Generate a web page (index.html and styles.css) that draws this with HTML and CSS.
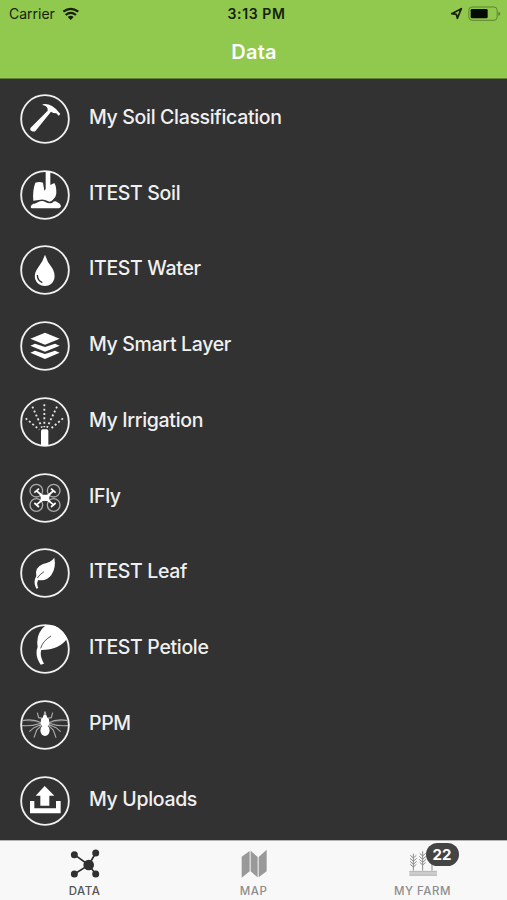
FILE: index.html
```html
<!DOCTYPE html>
<html lang="en">
<head>
<meta charset="utf-8">
<title>Data</title>
<link rel="stylesheet" href="styles.css">
</head>
<body>
<div class="app">
  <header class="header">
    <div class="status">
      <div class="status-left"><span>Carrier</span>
        <svg class="wifi" viewBox="186 18 54 40"><g fill="none" stroke="#17200c" stroke-width="6.5"><path d="M190 32Q212 15 235 32"/><path d="M197 42Q212 29 228 42"/></g><path d="M203 48Q212 41 221 48L212 57Z" fill="#17200c"/></svg>
      </div>
      <div class="status-time">3:13 PM</div>
      <div class="status-right">
        <svg class="locate" viewBox="598 20 40 40"><path d="M603 40L632 25L620 54L617 42Z" fill="none" stroke="#17200c" stroke-width="5" stroke-linejoin="round"/></svg>
        <svg class="battery" viewBox="656 16 99 46"><rect x="658.500" y="19" width="85" height="40" rx="10" fill="none" stroke="#5f8430" stroke-width="3"/><rect x="664" y="25" width="51" height="28" rx="4" fill="#050a02"/><path d="M747 33Q753 35 753 39T747 46Z" fill="#5f8430"/></svg>
      </div>
    </div>
    <h1 class="title">Data</h1>
  </header>
  <ul class="list">
    <li class="row">
      <svg class="icon" viewBox="30 26 150 150"><circle class="ring" cx="105" cy="101" r="71.500"/><path d="M98 57Q112 54 126 62Q140 70 151 86L146 91L139 84L130 83L123 79L77 136Q73 141 65 137Q58 133 62 127L113 76Q115 63 98 59Z"/></svg>
      <span>My Soil Classification</span></li>
    <li class="row">
      <svg class="icon" viewBox="30 253 150 150"><circle class="ring" cx="105" cy="328" r="71.500"/><path d="M107 257H121V298L133 292Q140 303 139 324Q138 334 128 343Q121 350 115 347Q104 341 92 342Q81 344 70 345Q67 315 76 291Q88 287 99 291L103 315L107 310Z"/><path d="M63 367Q60 359 70 354Q77 355 83 350Q97 343 106 349Q118 355 127 351Q135 343 142 350Q151 354 153 361Q152 367 147 368H66Z"/></svg>
      <span>ITEST Soil</span></li>
    <li class="row">
      <svg class="icon" viewBox="30 31 150 150"><circle class="ring" cx="105" cy="106" r="71.500"/><path d="M105 60Q111 81 126 99Q136 114 133 132Q127 153 105 154Q82 153 75 132Q72 114 84 99Q99 80 105 60Z"/><path class="cut" d="M82 121Q82 137 97 144" stroke-width="3"/></svg>
      <span>ITEST Water</span></li>
    <li class="row">
      <svg class="icon" viewBox="30 258 150 150"><circle class="ring" cx="105" cy="333" r="71.500"/><path d="M61 311L105 293L149 311L105 329ZM61 332L75 326L105 336L135 326L149 332L105 350ZM61 353L75 347L105 357L135 347L149 353L105 372Z"/></svg>
      <span>My Smart Layer</span></li>
    <li class="row">
      <svg class="icon" viewBox="30 35 150 150"><circle class="ring" cx="105" cy="110" r="71.500"/><path d="M93 181V138Q93 132 98 132H110Q115 132 115 138V181Z"/><path class="spray" d="M103 57V126M67 64L96 127M141 64L111 127M47 99L88 133M159 99L119 133"/></svg>
      <span>My Irrigation</span></li>
    <li class="row">
      <svg class="icon" viewBox="30 263 150 150"><circle class="ring" cx="105" cy="338" r="71.500"/><g class="rotor"><circle cx="79" cy="316" r="19"/><circle cx="131" cy="316" r="19"/><circle cx="79" cy="359" r="19"/><circle cx="131" cy="359" r="19"/></g><path class="arms" d="M80 317L130 358M130 317L80 358M73 322L87 310M123 310L137 322M73 353L87 365M123 365L137 353"/><path d="M87 324L98 328H112L123 324L118 335V342L123 352L112 347H98L87 352L92 342V335Z"/></svg>
      <span>IFly</span></li>
    <li class="row">
      <svg class="icon" viewBox="30 25 150 150"><circle class="ring" cx="105" cy="100" r="71.500"/><path d="M133 54Q139 84 124 106Q109 126 85 121Q78 130 85 145L79 147Q68 127 79 109Q73 84 99 73Q123 68 133 54Z"/><path class="cut thin" d="M82 115Q89 104 102 96"/></svg>
      <span>ITEST Leaf</span></li>
    <li class="row">
      <svg class="icon" viewBox="30 252 150 150"><circle class="ring" cx="105" cy="327" r="71.500"/><path d="M107 256Q149 249 172 295Q149 330 94 330Q88 346 102 371L92 374Q73 347 83 320Q76 282 107 256Z"/><path class="cut thin" d="M92 325Q98 303 123 288"/></svg>
      <span>ITEST Petiole</span></li>
    <li class="row">
      <svg class="icon" viewBox="30 29 150 150"><circle class="ring" cx="105" cy="104" r="71.500"/><path class="legs" d="M99 84L86 82L82 67M111 84L124 82L128 67M97 103L80 119L72 142M113 103L130 119L138 142M97 101L72 112L58 124M113 101L138 112L152 124M103 74L104 64M107 74L106 64"/><path class="wings" d="M96 98Q68 84 37 91M36 106Q70 108 96 98M114 98Q142 84 173 91M174 106Q140 108 114 98"/><path d="M98 82L101 74H109L112 82L117 87L118 100L113 107Q119 111 119 121Q117 135 105 137Q93 135 91 121Q91 111 97 107L92 100L93 87Z"/></svg>
      <span>PPM</span></li>
    <li class="row">
      <svg class="icon" viewBox="30 256 150 150"><circle class="ring" cx="105" cy="331" r="71.500"/><path d="M104 286L133 315H118V345H91V315H77ZM60 331H73V353H138V331H152V368H60Z"/></svg>
      <span>My Uploads</span></li>
  </ul>
  <nav class="tabs">
    <div class="tab active"><svg class="tab-icon" viewBox="57 39 102 96"><path d="M74 59L117 90L138 54M74 117L117 90L138 117" fill="none" stroke="#303030" stroke-width="5"/><g fill="#303030"><circle cx="117" cy="90" r="16"/><circle cx="74" cy="59" r="10.500"/><circle cx="138" cy="54" r="10.500"/><circle cx="74" cy="117" r="10.500"/><circle cx="138" cy="117" r="10.500"/></g></svg><span>DATA</span></div>
    <div class="tab"><svg class="tab-icon" viewBox="561 39 102 96"><path d="M575 65L599 48V109L575 128ZM602 47L623 66V127L602 109ZM626 66L650 44V109L626 127Z" fill="#999"/></svg><span>MAP</span></div>
    <div class="tab"><div class="farm"><svg class="tab-icon" viewBox="107 39 102 96"><g stroke="#8c8c8c" fill="none" stroke-width="3"><path d="M129 56V107M157 49V107M185 56V107"/><path d="M120 61L129 69L138 61M119 70L129 79L139 70M119 79L129 88L139 79M120 88L129 96L138 88M148 55L157 63L166 55M147 64L157 73L167 64M147 73L157 82L167 73M148 82L157 90L166 82"/></g><path d="M117 108H200V122H117Z" fill="#ccc"/><path d="M117 109H200M117 121H200" stroke="#aaa" stroke-width="2"/></svg><b class="badge">22</b></div><span>MY FARM</span></div>
  </nav>
</div>
</body>
</html>
```
FILE: styles.css
```css
* { box-sizing: border-box; }
body { margin: 0; font-family: Inter, "Liberation Sans", sans-serif; }
.app { width: 507px; height: 900px; display: flex; flex-direction: column; background: #323232; overflow: hidden; }
.header { height: 79px; background: #90c94d; border-bottom: 1px solid #628239; color: #17200c; flex: none; }
.status { display: grid; grid-template-columns: 1fr auto 1fr; height: 27px; align-items: center; padding: 0 6px 0 9px; font-size: 14px; }
.status-left, .status-right { display: flex; align-items: center; }
.status-left { gap: 7px; }
.status-right { justify-content: flex-end; gap: 5px; }
.wifi { width: 18px; height: 13.333px; }
.locate { width: 13.333px; height: 13.333px; }
.battery { width: 33px; height: 15.333px; }
.status-time { font-weight: 600; white-space: nowrap; letter-spacing: .6px; padding-left: 3px; }
.title { margin: 0; padding-left: 1px; font-size: 20px; font-weight: 600; line-height: 50px; letter-spacing: .25px; text-align: center; color: #fff; }
.list { list-style: none; margin: 0; padding: 0; height: 761px; flex: none; }
.row { height: 75.75px; display: flex; align-items: center; gap: 19px; padding-left: 20px; color: #f0f0f0; font-size: 19.500px; font-weight: 500; line-height: 24px; letter-spacing: -.33px; white-space: nowrap; }
.icon { width: 50px; height: 50px; flex: none; margin-top: 4px; fill: #fff; }
.ring { fill: none; stroke: #f0f0f0; stroke-width: 5.500; }
.cut { fill: none; stroke: #323232; stroke-width: 4; }
.thin { stroke-width: 2.500; }
.spray { fill: none; stroke: #e6e6e6; stroke-width: 5.500; stroke-dasharray: 6 7; }
.rotor { fill: none; stroke: #aaa; stroke-width: 4; }
.arms { fill: none; stroke: #fff; stroke-width: 5; }
.legs { fill: none; stroke: #aaa; stroke-width: 3.500; }
.wings { fill: #555; stroke: #aaa; stroke-width: 3.500; }
.tabs { height: 60px; flex: none; display: grid; grid-template-columns: repeat(3, 1fr); background: #f8f8f8; border-top: 1px solid #b5b5b5; }
.tab { display: flex; flex-direction: column; align-items: center; padding-top: 7px; color: #8d8d8d; font-size: 11.500px; font-weight: 500; line-height: 14px; letter-spacing: .5px; }
.active { color: #555; }
.tab-icon { display: block; width: 34px; height: 32px; }
.active .tab-icon { transform: translateX(.7px); }
.tab > span { margin-top: 4px; }
.farm { position: relative; }
.badge { position: absolute; left: 20px; top: -5px; width: 33px; height: 23px; border-radius: 12px; background: #444; color: #fff; font-size: 15px; line-height: 23px; text-align: center; letter-spacing: 0; }
```
